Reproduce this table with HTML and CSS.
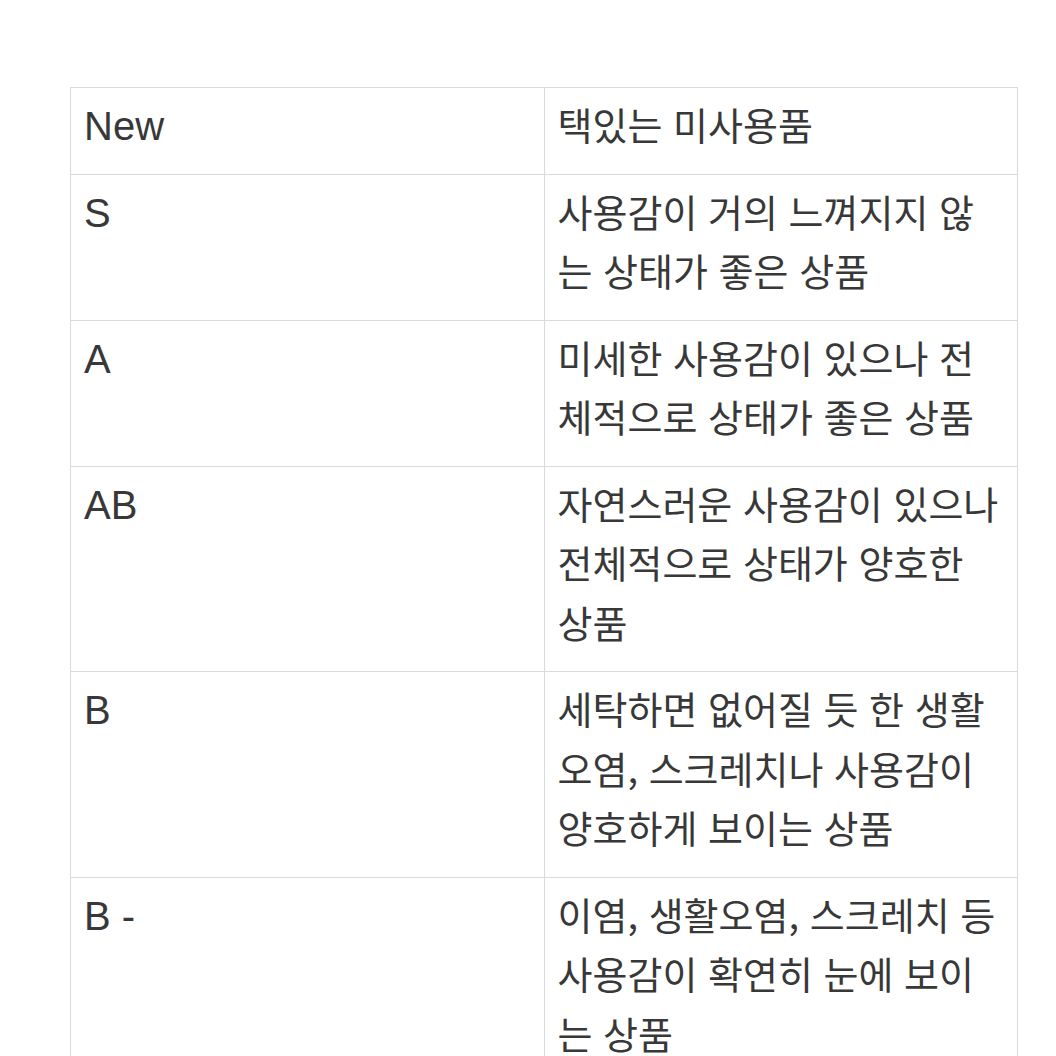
FILE: index.html
```html
<!DOCTYPE html>
<html lang="ko">
<head>
<meta charset="utf-8">
<title>상품 상태 등급</title>
<link rel="stylesheet" href="styles.css">
</head>
<body>
<main class="page">
  <table class="grade-table">
    <colgroup>
      <col class="col-grade">
      <col class="col-desc">
    </colgroup>
    <tbody>
      <tr>
        <td class="grade">New</td>
        <td class="desc">택있는 미사용품</td>
      </tr>
      <tr>
        <td class="grade">S</td>
        <td class="desc">사용감이 거의 느껴지지 않<br>는 상태가 좋은 상품</td>
      </tr>
      <tr>
        <td class="grade">A</td>
        <td class="desc">미세한 사용감이 있으나 전<br>체적으로 상태가 좋은 상품</td>
      </tr>
      <tr>
        <td class="grade">AB</td>
        <td class="desc">자연스러운 사용감이 있으나<br>전체적으로 상태가 양호한<br>상품</td>
      </tr>
      <tr>
        <td class="grade">B</td>
        <td class="desc">세탁하면 없어질 듯 한 생활<br>오염, 스크레치나 사용감이<br>양호하게 보이는 상품</td>
      </tr>
      <tr>
        <td class="grade">B -</td>
        <td class="desc">이염, 생활오염, 스크레치 등<br>사용감이 확연히 눈에 보이<br>는 상품</td>
      </tr>
    </tbody>
  </table>
</main>
</body>
</html>
```

FILE: styles.css
```css
html, body {
  margin: 0;
  padding: 0;
  background: #ffffff;
}

.page {
  padding: 87px 38px 40px 70px;
}

.grade-table {
  width: 948px;
  border-collapse: collapse;
  table-layout: fixed;
  color: #383838;
}

.col-grade,
.col-desc {
  width: 50%;
}

.grade-table td {
  border: 1px solid #dadada;
  vertical-align: top;
  padding: 6px 13px 20px 13px;
  line-height: 59.5px;
  white-space: nowrap;
}

.grade {
  font-family: "Liberation Sans", Arial, sans-serif;
  font-size: 40px;
}

.grade-table td.grade {
  padding-top: 9px;
  padding-bottom: 17px;
}

.desc {
  font-family: "Noto Sans CJK KR", "Noto Sans", sans-serif;
  font-size: 38px;
}
```
